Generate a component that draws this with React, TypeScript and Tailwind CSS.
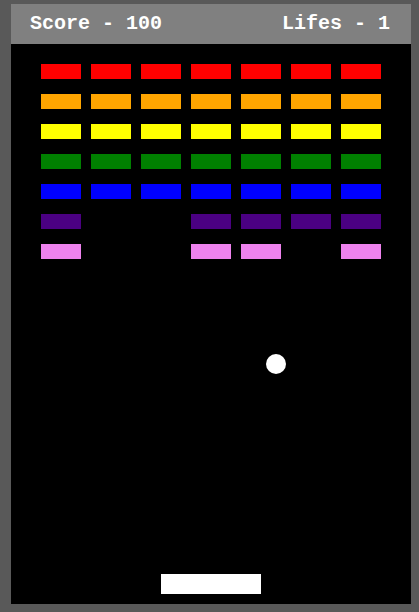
const rows: { color: string; cells: number[] }[] = [
  { color: "bg-[#ff0000]", cells: [1, 1, 1, 1, 1, 1, 1] },
  { color: "bg-[#ffa500]", cells: [1, 1, 1, 1, 1, 1, 1] },
  { color: "bg-[#ffff00]", cells: [1, 1, 1, 1, 1, 1, 1] },
  { color: "bg-[#008000]", cells: [1, 1, 1, 1, 1, 1, 1] },
  { color: "bg-[#0000ff]", cells: [1, 1, 1, 1, 1, 1, 1] },
  { color: "bg-[#4b0082]", cells: [1, 0, 0, 1, 1, 1, 1] },
  { color: "bg-[#ee82ee]", cells: [1, 0, 0, 1, 1, 0, 1] },
];

export default function App() {
  return (
    <div className="w-[419px] h-[612px] bg-[#595959] pt-[4px] pl-[11px]">
      <div className="w-[400px]">
        {/* header */}
        <div
          className="h-[40px] bg-[#808080] flex items-center justify-between pl-[19px] pr-[21px] text-white font-bold text-[20px]"
          style={{ fontFamily: '"Liberation Mono", monospace' }}
        >
          <span>Score - 100</span>
          <span>Lifes - 1</span>
        </div>
        {/* board */}
        <div className="relative h-[560px] bg-black pt-[20px] pl-[30px]">
          <div className="grid grid-cols-[repeat(7,40px)] auto-rows-[15px] gap-x-[10px] gap-y-[15px]">
            {rows.map((row, r) =>
              row.cells.map((on, c) => (
                <div key={`${r}-${c}`} className={on ? row.color : ""} />
              ))
            )}
          </div>
          <div className="absolute left-[255px] top-[310px] w-[20px] h-[20px] rounded-full bg-white" />
          <div className="absolute left-[150px] top-[530px] w-[100px] h-[20px] bg-white" />
        </div>
      </div>
    </div>
  );
}
